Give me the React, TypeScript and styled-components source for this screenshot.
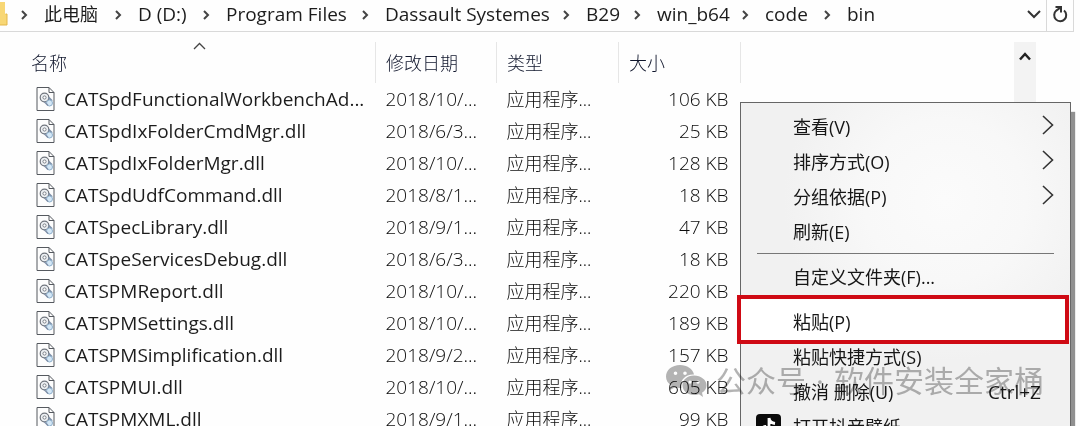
import React from "react";
import styled, { createGlobalStyle } from "styled-components";

const GlobalStyle = createGlobalStyle`
  * { box-sizing: border-box; }
  html, body { margin: 0; }
  body {
    background: #fefefe;
    color: #1c1c1c;
    font: 18px/24px "Open Sans", "Noto Sans CJK SC", sans-serif;
  }
  button { border: 0; padding: 0; margin: 0; background: none; font: inherit; color: inherit; text-align: left; }
`;

const Window = styled.div`
  position: relative;
  height: 100vh;
  overflow: hidden;
`;

const AddressBar = styled.header`
  display: flex;
  height: 32px;
  margin-right: 6px;
  border-bottom: 1px solid #d9d9d9;
  border-right: 1px solid #d9d9d9;
`;

const FolderIcon = styled.svg`
  width: 8px;
  height: 28px;
  flex: none;
`;

const Crumbs = styled.nav`
  display: flex;
  flex: 1;
  align-items: center;
  padding-bottom: 4px;
  white-space: nowrap;
`;

const Crumb = styled.button<{ $width: number; $cjk?: boolean }>`
  flex: none;
  width: ${(p) => p.$width}px;
  font-size: ${(p) => (p.$cjk ? 18 : 19)}px;
`;

const CrumbArrow = styled.svg`
  width: 8px;
  height: 10px;
  margin: 2px 16px 0;
  flex: none;
  fill: none;
  stroke: #444;
  stroke-width: 2;

  &:first-child { margin-left: 12px; }
`;

const BarButton = styled.button<{ $divided?: boolean }>`
  display: flex;
  align-items: center;
  justify-content: center;
  width: ${(p) => (p.$divided ? 27 : 24)}px;
  padding-bottom: 3px;
  border-left: ${(p) => (p.$divided ? "1px solid #d9d9d9" : "0")};
  svg { fill: none; stroke: #333; stroke-width: 2; }
`;

const Content = styled.main`
  display: flex;
  align-items: flex-start;
  padding-top: 10px;
`;

const FileTable = styled.table`
  flex: 1;
  table-layout: fixed;
  border-collapse: collapse;
  white-space: nowrap;
`;

const HeadCell = styled.th<{ $width?: number; $first?: boolean }>`
  position: relative;
  width: ${(p) => (p.$width ? `${p.$width}px` : "auto")};
  height: 41px;
  padding: 0 0 0 ${(p) => (p.$first ? 31 : 10)}px;
  border-right: 1px solid #e6e6e6;
  color: #10162c;
  font-weight: 300;
  text-align: left;
`;

const SortCaret = styled.svg`
  position: absolute;
  top: 0;
  left: 193px;
  fill: none;
  stroke: #444;
  stroke-width: 1.3;
`;

const Cell = styled.td<{ $latin?: boolean; $right?: boolean }>`
  height: 32px;
  padding: ${(p) => (p.$right ? "0 12px 0 0" : "0 0 0 10px")};
  color: #0c0c0c;
  font-size: ${(p) => (p.$latin ? 19 : 18)}px;
  font-weight: 300;
  text-align: ${(p) => (p.$right ? "right" : "left")};
`;

const NameCell = styled.td`
  height: 32px;
  padding: 0 0 0 36px;
  font-size: 19px;
`;

const FileName = styled.div`
  display: flex;
  align-items: center;
  gap: 9px;
`;

const EmptyArea = styled.div`
  width: 273px;
  flex: none;
`;

const ScrollTrack = styled.div`
  display: flex;
  justify-content: center;
  width: 22px;
  height: 100vh;
  margin-right: 44px;
  padding-top: 9px;
  flex: none;
  background: #f3f3f3;
`;

const Menu = styled.div`
  position: absolute;
  top: 102px;
  right: 9px;
  width: 331px;
  padding: 6px 0;
  border: 1px solid #666;
  background: radial-gradient(circle at 62% 28%, #fbfbfb 0, #f8f8f8 25%, #f1f1f1 50%);
  box-shadow: 4px 10px 1px #909090;
`;

const MenuItem = styled.button`
  position: relative;
  display: flex;
  align-items: center;
  width: 100%;
  height: 35px;
  padding: 0 29px 0 52px;
  color: #161616;
`;

const Label = styled.span`
  flex: 1;
`;

const Shortcut = styled.span`
  font-size: 19px;
`;

const SubArrow = styled.svg`
  margin: 0 -13px 4px 0;
  fill: none;
  stroke: #333;
  stroke-width: 1.6;
`;

const Separator = styled.hr`
  height: 1px;
  margin: 4px 16px 5px;
  border: 0;
  background: #777;
`;

const PasteBlock = styled.div`
  position: relative;
  padding-top: 10px;
`;

const RedFrame = styled.div`
  position: absolute;
  inset: 1px 1px -5px -4px;
  border: 4px solid #cf0a14;
  background: #fff;
`;

const AppIcon = styled.svg`
  position: absolute;
  left: 15px;
  top: 5px;
`;

const Watermark = styled.div`
  position: absolute;
  right: 36px;
  top: 361px;
  display: flex;
  align-items: center;
  gap: 9px;
  color: #b4b4b4;
  fill: #b4b4b4;
  font-size: 30px;
  line-height: 40px;
  white-space: nowrap;
  pointer-events: none;
  mix-blend-mode: multiply;
`;

const WatermarkText = styled.span`
  display: flex;
  gap: 10px;
`;

const crumbs = [
  { name: "此电脑", width: 54, cjk: true },
  { name: "D (D:)", width: 48 },
  { name: "Program Files", width: 119 },
  { name: "Dassault Systemes", width: 161 },
  { name: "B29", width: 31 },
  { name: "win_b64", width: 68 },
  { name: "code", width: 42 },
  { name: "bin", width: 27 },
];

const files = [
  ["CATSpdFunctionalWorkbenchAd...", "2018/10/...", "106 KB"],
  ["CATSpdIxFolderCmdMgr.dll", "2018/6/3...", "25 KB"],
  ["CATSpdIxFolderMgr.dll", "2018/10/...", "128 KB"],
  ["CATSpdUdfCommand.dll", "2018/8/1...", "18 KB"],
  ["CATSpecLibrary.dll", "2018/9/1...", "47 KB"],
  ["CATSpeServicesDebug.dll", "2018/6/3...", "18 KB"],
  ["CATSPMReport.dll", "2018/10/...", "220 KB"],
  ["CATSPMSettings.dll", "2018/10/...", "189 KB"],
  ["CATSPMSimplification.dll", "2018/9/2...", "157 KB"],
  ["CATSPMUI.dll", "2018/10/...", "605 KB"],
  ["CATSPMXML.dll", "2018/9/1...", "99 KB"],
];

const DllIcon = () => (
  <svg width="19" height="24" viewBox="0 0 19 24" fill="none" aria-hidden="true">
    <path d="M1 .5H13L18 5.500V23.500H1Z" fill="#fdfdfd" stroke="#55595f" />
    <path d="M13 .5V5.500H18" stroke="#55595f" />
    <circle cx="8.500" cy="10.500" r="4.300" fill="#eef1f4" stroke="#70757d" strokeWidth="1.200" />
    <circle cx="8.500" cy="10.500" r="1.600" fill="#fff" stroke="#7b8088" />
    <path d="M12.500 10.500L16 14" stroke="#7f90a8" strokeWidth="2" />
    <circle cx="13.500" cy="16" r="3" fill="#d3e7f6" stroke="#8fb0cc" />
    <path d="M8 14.500L12 18.500" stroke="#7f8fa5" strokeWidth="1.200" />
  </svg>
);

const SubmenuArrow = () => (
  <SubArrow width="12" height="20" viewBox="0 0 12 20" aria-hidden="true">
    <path d="M1 1L10.500 10L1 19" />
  </SubArrow>
);

export default function App() {
  return (
    <Window>
      <GlobalStyle />
      <AddressBar>
        <FolderIcon viewBox="0 0 8 28" aria-hidden="true">
          <path d="M0 2H5V14H7V25H0Z" fill="#f8d775" />
          <path d="M5.500 14H7V25H0" fill="none" stroke="#e3b64a" />
        </FolderIcon>
        <Crumbs aria-label="Path">
          {crumbs.map((c) => (
            <React.Fragment key={c.name}>
              <CrumbArrow viewBox="0 0 8 10" aria-hidden="true">
                <path d="M2 1L6 5L2 9" />
              </CrumbArrow>
              <Crumb $width={c.width} $cjk={c.cjk}>{c.name}</Crumb>
            </React.Fragment>
          ))}
        </Crumbs>
        <BarButton aria-label="History">
          <svg width="14" height="10" viewBox="0 0 14 10"><path d="M1 2L7 8L13 2" /></svg>
        </BarButton>
        <BarButton $divided aria-label="Refresh">
          <svg width="16" height="18" viewBox="0 0 16 18">
            <path d="M12 5.500A6 6 0 1 1 4.300 5.600L8.500 2.500" />
            <path d="M3.500 2H9V7.500" />
          </svg>
        </BarButton>
      </AddressBar>
      <Content>
        <FileTable>
          <thead>
            <tr>
              <HeadCell $first>
                名称
                <SortCaret width="13" height="8" viewBox="0 0 13 8" aria-hidden="true">
                  <path d="M1 7L6.500 1.500L12 7" />
                </SortCaret>
              </HeadCell>
              <HeadCell $width={121}>修改日期</HeadCell>
              <HeadCell $width={122}>类型</HeadCell>
              <HeadCell $width={122}>大小</HeadCell>
            </tr>
          </thead>
          <tbody>
            {files.map(([name, date, size]) => (
              <tr key={name}>
                <NameCell><FileName><DllIcon />{name}</FileName></NameCell>
                <Cell $latin>{date}</Cell>
                <Cell>应用程序...</Cell>
                <Cell $latin $right>{size}</Cell>
              </tr>
            ))}
          </tbody>
        </FileTable>
        <EmptyArea />
        <ScrollTrack>
          <svg width="12" height="10" viewBox="0 0 12 10" fill="none" stroke="#222" strokeWidth="2.500" aria-hidden="true">
            <path d="M1 8.500L6 3L11 8.500" />
          </svg>
        </ScrollTrack>
      </Content>
      <Menu>
        <MenuItem><Label>查看(V)</Label><SubmenuArrow /></MenuItem>
        <MenuItem><Label>排序方式(O)</Label><SubmenuArrow /></MenuItem>
        <MenuItem><Label>分组依据(P)</Label><SubmenuArrow /></MenuItem>
        <MenuItem><Label>刷新(E)</Label></MenuItem>
        <Separator />
        <MenuItem><Label>自定义文件夹(F)...</Label></MenuItem>
        <PasteBlock>
          <RedFrame />
          <MenuItem><Label>粘贴(P)</Label></MenuItem>
        </PasteBlock>
        <MenuItem><Label>粘贴快捷方式(S)</Label></MenuItem>
        <MenuItem><Label>撤消 删除(U)</Label><Shortcut>Ctrl+Z</Shortcut></MenuItem>
        <MenuItem>
          <AppIcon width="25" height="25" viewBox="0 0 25 25" aria-hidden="true">
            <rect width="25" height="25" rx="4" fill="#0b0b0b" />
            <path d="M13 4V16A3.500 3.500 0 1 1 10 12.500M13 4C13.500 7 15.500 9 19 9.500" fill="none" stroke="#fff" strokeWidth="2.800" />
          </AppIcon>
          <Label>打开抖音壁纸</Label>
        </MenuItem>
      </Menu>
      <Watermark>
        <svg width="41" height="33" viewBox="0 0 41 33" aria-hidden="true">
          <path fillRule="evenodd" d="M14 0C6 0 0 5 0 11.500C0 15.500 2 18.500 5.500 20.500L4 25L9 22.300C11 23 13 23.200 15.500 23C13 15 20 9 28 9.500C27 4 21 0 14 0ZM9.500 6.500A1.800 1.800 0 1 1 9.500 10.100A1.800 1.800 0 1 1 9.500 6.500ZM19 6.500A1.800 1.800 0 1 1 19 10.100A1.800 1.800 0 1 1 19 6.500Z" />
          <path fillRule="evenodd" d="M28 10.500C21 10.500 16.500 15 16.500 20.200C16.500 26 22 30 28 30C30 30 31.500 29.700 33 29.200L37 32L36 27.800C39 26 40.500 23.500 40.500 20.200C40.500 15 35 10.500 28 10.500ZM24 15.500A1.600 1.600 0 1 1 24 18.700A1.600 1.600 0 1 1 24 15.500ZM32 15.500A1.600 1.600 0 1 1 32 18.700A1.600 1.600 0 1 1 32 15.500Z" />
        </svg>
        <WatermarkText><span>公众号</span><span>·</span><span>软件安装全家桶</span></WatermarkText>
      </Watermark>
    </Window>
  );
}
